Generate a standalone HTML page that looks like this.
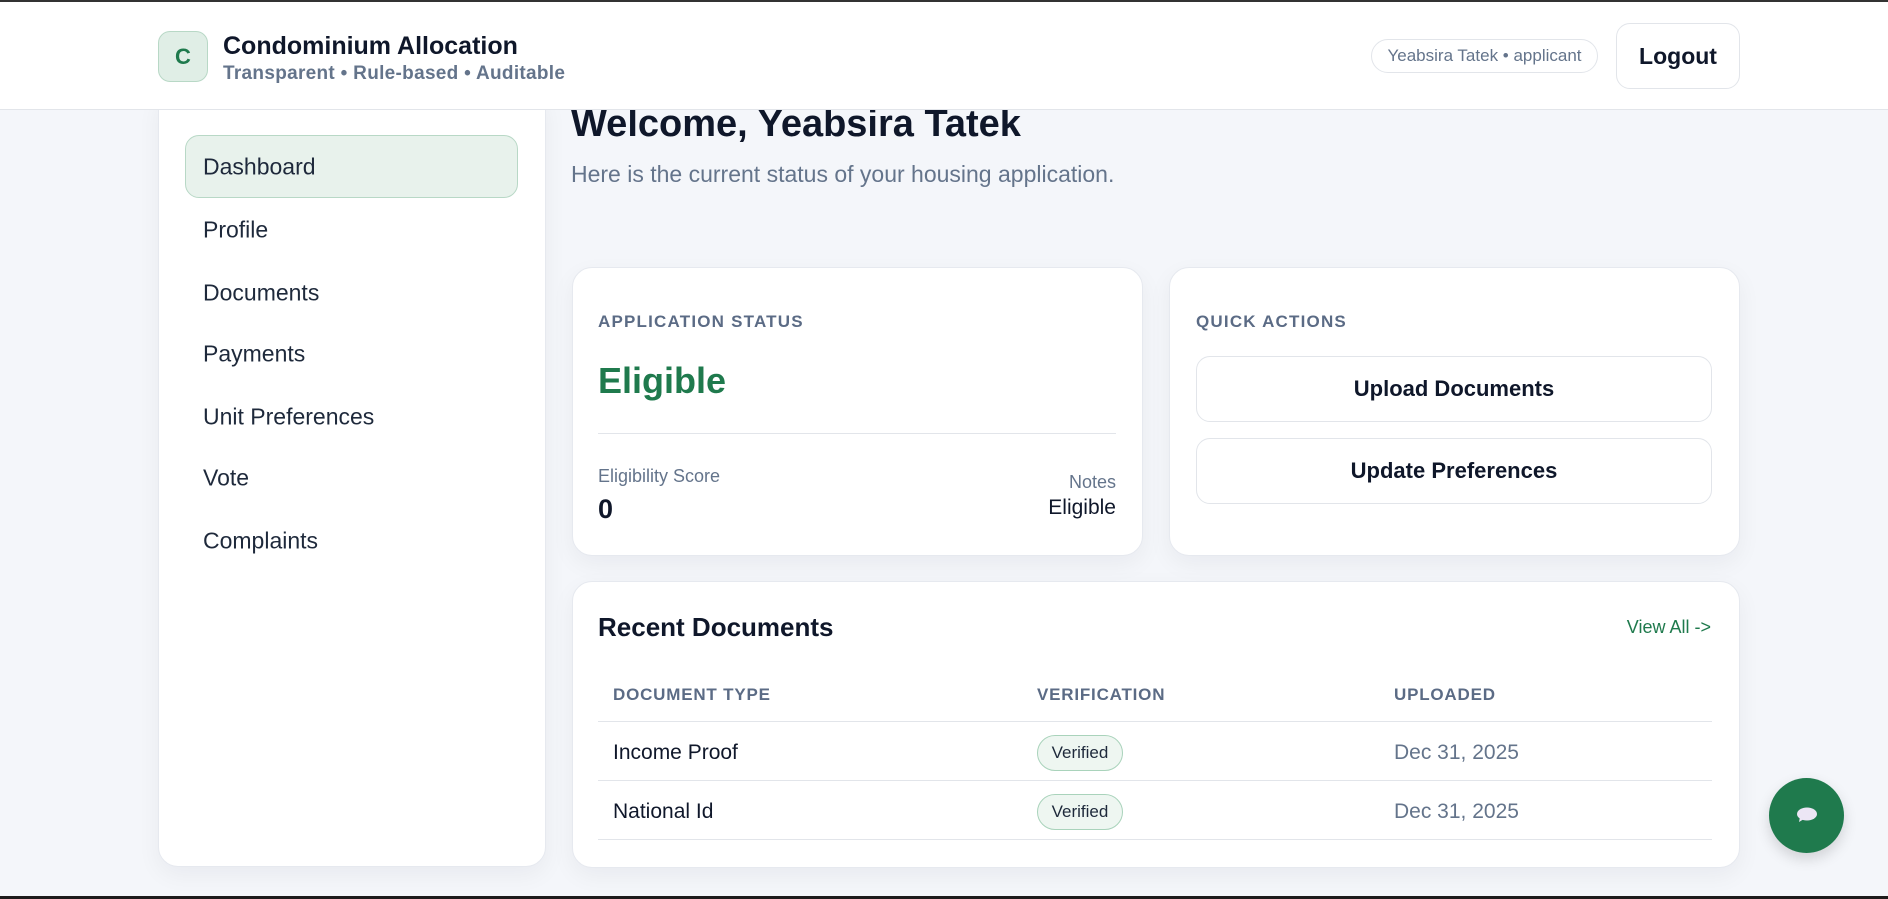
<!DOCTYPE html>
<html><head><meta charset="utf-8"><style>
*{box-sizing:border-box;margin:0;padding:0}
body{width:1888px;height:899px;overflow:hidden;background:#f4f6fa;font-family:"Liberation Sans","DejaVu Sans",sans-serif;color:#0f172a;position:relative}
.a{position:absolute}
.topline{left:0;top:0;width:1888px;height:2px;background:#333}
.botline{left:0;top:896px;width:1888px;height:3px;background:#1d1b1b}
header{position:absolute;left:0;top:2px;width:1888px;height:108px;background:#fff;border-bottom:1px solid #e2e5ea;z-index:5}
.logo{left:158px;top:29px;width:50px;height:51px;border-radius:12px;background:#e0eee6;border:1px solid #b8d8c6;color:#1f7a4d;font-weight:bold;font-size:22px;display:flex;align-items:center;justify-content:center}
.card{background:#fff;border:1px solid #e6e9ef;border-radius:20px;box-shadow:0 8px 24px rgba(15,23,42,.05)}
.side{left:158px;top:90px;width:388px;height:777px}
.nav{left:203px;font-size:23px;color:#1e293b;transform:translateY(-50%)}
.lbl{font-size:17px;font-weight:bold;color:#5b6b85;letter-spacing:1.2px}
.btn{position:absolute;left:1196px;width:516px;height:66px;border:1px solid #e2e5ea;border-radius:14px;background:#fff;font-size:22px;font-weight:bold;display:flex;align-items:center;justify-content:center}
.th{top:685px;font-size:17px;font-weight:bold;color:#5b6b85;letter-spacing:.8px}
.hr{left:598px;width:1114px;height:1px;background:#e2e5ea}
.td{font-size:21px;transform:translateY(-50%)}
.badge{left:1037px;width:86px;height:36px;border:1px solid #a9d3bb;background:#eef6f1;border-radius:18px;font-size:17px;display:flex;align-items:center;justify-content:center;color:#1e293b}
.date{left:1394px;color:#64748b}
</style></head><body>
<div class="a topline"></div>
<header>
<div class="a logo">C</div>
<div class="a" style="left:223px;top:30px;font-size:25px;font-weight:bold;color:#0f172a">Condominium Allocation</div>
<div class="a" style="left:223px;top:61px;font-size:19px;font-weight:bold;color:#64748b;letter-spacing:.3px">Transparent • Rule-based • Auditable</div>
<div class="a" style="left:1371px;top:37px;width:227px;height:34px;border:1px solid #e2e5ea;border-radius:17px;font-size:17px;color:#64748b;display:flex;align-items:center;justify-content:center">Yeabsira Tatek • applicant</div>
<div class="a" style="left:1616px;top:21px;width:124px;height:66px;border:1px solid #e2e5ea;border-radius:14px;font-size:23px;font-weight:bold;display:flex;align-items:center;justify-content:center">Logout</div>
</header>

<div class="a card side"></div>
<div class="a" style="left:185px;top:135px;width:333px;height:63px;background:#e8f2ec;border:1px solid #b8d8c6;border-radius:14px"></div>
<div class="a nav" style="top:167px">Dashboard</div>
<div class="a nav" style="top:230px">Profile</div>
<div class="a nav" style="top:293px">Documents</div>
<div class="a nav" style="top:354px">Payments</div>
<div class="a nav" style="top:417px">Unit Preferences</div>
<div class="a nav" style="top:478px">Vote</div>
<div class="a nav" style="top:541px">Complaints</div>

<div class="a" style="left:571px;top:103px;font-size:38px;font-weight:bold">Welcome, Yeabsira Tatek</div>
<div class="a" style="left:571px;top:161px;font-size:23px;color:#64748b">Here is the current status of your housing application.</div>

<div class="a card" style="left:572px;top:267px;width:571px;height:289px"></div>
<div class="a lbl" style="left:598px;top:312px">APPLICATION STATUS</div>
<div class="a" style="left:598px;top:360px;font-size:36px;font-weight:bold;color:#1f7a4d">Eligible</div>
<div class="a" style="left:598px;top:433px;width:518px;height:1px;background:#e2e5ea"></div>
<div class="a" style="left:598px;top:466px;font-size:18px;color:#64748b">Eligibility Score</div>
<div class="a" style="left:598px;top:494px;font-size:27px;font-weight:bold">0</div>
<div class="a" style="left:900px;width:216px;text-align:right;top:472px;font-size:18px;color:#64748b">Notes</div>
<div class="a" style="left:900px;width:216px;text-align:right;top:496px;font-size:21px">Eligible</div>

<div class="a card" style="left:1169px;top:267px;width:571px;height:289px"></div>
<div class="a lbl" style="left:1196px;top:312px">QUICK ACTIONS</div>
<div class="btn" style="top:356px">Upload Documents</div>
<div class="btn" style="top:438px">Update Preferences</div>

<div class="a card" style="left:572px;top:581px;width:1168px;height:287px"></div>
<div class="a" style="left:598px;top:612px;font-size:26px;font-weight:bold">Recent Documents</div>
<div class="a" style="left:1560px;width:151px;text-align:right;top:617px;font-size:18px;color:#1f7a4d">View All -&gt;</div>
<div class="a th" style="left:613px">DOCUMENT TYPE</div>
<div class="a th" style="left:1037px">VERIFICATION</div>
<div class="a th" style="left:1394px">UPLOADED</div>
<div class="a hr" style="top:721px"></div>
<div class="a hr" style="top:780px"></div>
<div class="a hr" style="top:839px"></div>
<div class="a td" style="left:613px;top:753px">Income Proof</div>
<div class="a badge" style="top:735px">Verified</div>
<div class="a td date" style="top:753px">Dec 31, 2025</div>
<div class="a td" style="left:613px;top:812px">National Id</div>
<div class="a badge" style="top:794px">Verified</div>
<div class="a td date" style="top:812px">Dec 31, 2025</div>

<div class="a" style="left:1769px;top:778px;width:75px;height:75px;border-radius:50%;background:#1f7a4d;box-shadow:0 6px 14px rgba(0,0,0,.15)">
<svg width="75" height="75" viewBox="0 0 75 75"><ellipse cx="38" cy="36" rx="10" ry="6.5" fill="#ece6f5"/><path d="M31 39 L30 44 L35 41 Z" fill="#ece6f5"/></svg>
</div>
<div class="a botline"></div>
</body></html>
